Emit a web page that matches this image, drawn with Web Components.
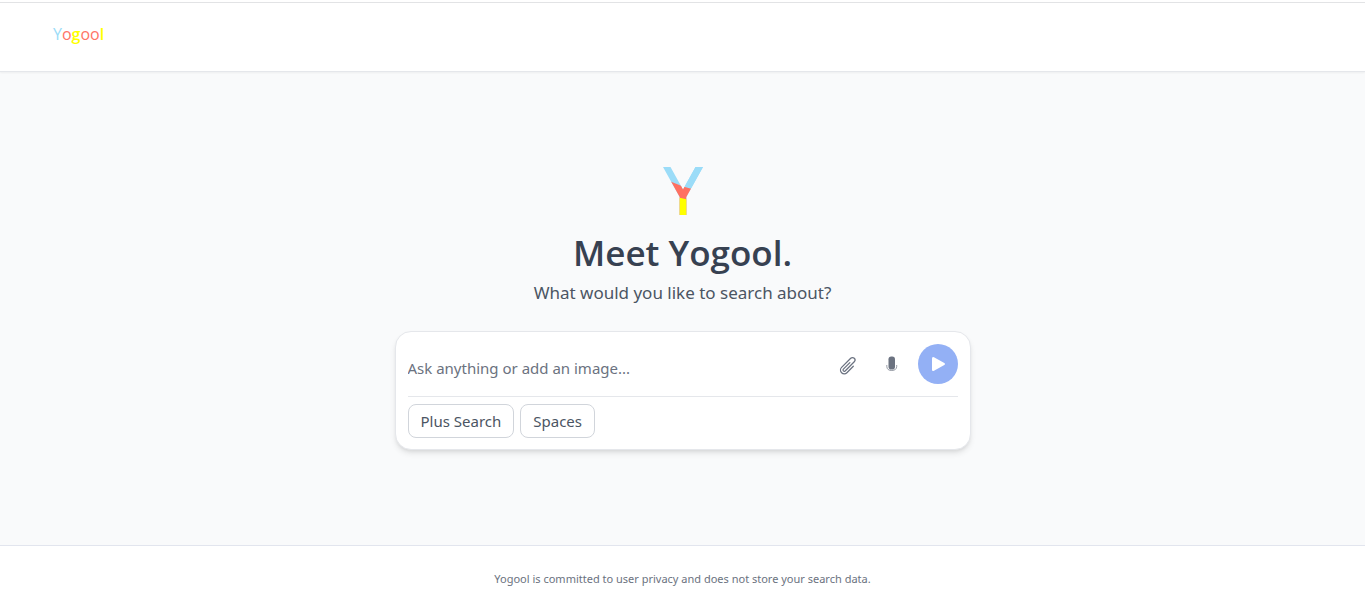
<!DOCTYPE html>
<html lang="en">
<head>
<meta charset="utf-8">
<meta name="viewport" content="width=device-width, initial-scale=1">
<title>Yogool</title>
<style>
  body { margin: 0; font-family: "Noto Sans", "Open Sans", sans-serif; color: #374151; background: #fff; }
</style>
</head>
<body>
<yogool-page>
  <site-header slot="header"></site-header>
  <hero-intro>
    <span slot="title">Meet Yogool.</span>
    <span slot="subtitle">What would you like to search about?</span>
  </hero-intro>
  <search-box placeholder="Ask anything or add an image...">
    <chip-button>Plus Search</chip-button>
    <chip-button>Spaces</chip-button>
  </search-box>
  <site-footer slot="footer">Yogool is committed to user privacy and does not store your search data.</site-footer>
</yogool-page>
<script>
class BaseElement extends HTMLElement {
  constructor() {
    super();
    const t = document.createElement('template');
    t.innerHTML = this.constructor.markup;
    this.attachShadow({ mode: 'open' }).append(t.content.cloneNode(true));
  }
}

customElements.define('yogool-page', class extends BaseElement {
  static markup = `
    <style>
      :host { display: flex; flex-direction: column; min-height: 100vh; padding-top: 2px; box-sizing: border-box; }
      main { flex: 1; display: flex; flex-direction: column; align-items: center; background: #f9fafb; padding: 91px 16px 95px; }
    </style>
    <slot name="header"></slot>
    <main><slot></slot></main>
    <slot name="footer"></slot>`;
});

customElements.define('site-header', class extends BaseElement {
  static markup = `
    <style>
      :host { display: block; position: relative; background: #fff; border-top: 1px solid #e2e3e5; border-bottom: 1px solid #e5e7eb; box-shadow: 0 1px 2px rgba(0,0,0,.05); padding: 19px 53px 25px; }
      a { display: block; width: max-content; font-family: "Open Sans", sans-serif; font-size: 16px; line-height: 24px; text-decoration: none; }
      .b { color: #9bdcf8; } .r { color: #ff7466; } .y { color: #ffff00; font-weight: 600; }
    </style>
    <a href="#" aria-label="Yogool"><span class="b">Y</span><span class="r">o</span><span class="y">g</span><span class="r">oo</span><span class="y">l</span></a>`;
});

customElements.define('hero-intro', class extends BaseElement {
  static markup = `
    <style>
      :host { display: flex; flex-direction: column; align-items: center; text-align: center; }
      svg { display: block; width: 40px; height: 56px; }
      h1 { margin: 14px 0 0; font-family: "Open Sans", sans-serif; font-size: 35px; line-height: 40px; font-weight: 600; color: #374151; }
      p { margin: 6px 0 0; font-size: 17px; line-height: 28px; color: #4b5563; }
    </style>
    <svg viewBox="0 0 40 56" aria-hidden="true">
      <defs><clipPath id="y"><path d="M0 4H7.500L20 26.500 32.500 4H40L23.300 34V52H16.700V34Z"/></clipPath></defs>
      <g clip-path="url(#y)">
        <path fill="#9bdcf8" d="M0 0H40V56H0Z"/>
        <path fill="#ff7061" d="M0 15.500L20 23.500 40 29V56H0Z"/>
        <path fill="#9bdcf8" d="M21 0H40V28L21 23Z"/>
        <path fill="#ffff00" d="M0 31L40 40V56H0Z"/>
      </g>
    </svg>
    <h1><slot name="title"></slot></h1>
    <p><slot name="subtitle"></slot></p>`;
});

customElements.define('chip-button', class extends BaseElement {
  static markup = `
    <style>
      :host { display: block; }
      button { display: block; font: inherit; font-size: 15px; line-height: 24px; padding: 4px 12px; color: #4b5563; background: #fff; border: 1px solid #d1d5db; border-radius: 8px; white-space: nowrap; cursor: pointer; }
    </style>
    <button type="button"><slot></slot></button>`;
});

customElements.define('search-box', class extends BaseElement {
  static markup = `
    <style>
      :host { display: block; box-sizing: border-box; width: 100%; max-width: 576px; margin-top: 24px; padding: 12px 12px 11px; background: #fff; border: 1px solid #e5e7eb; border-radius: 16px; box-shadow: 0 4px 6px -1px rgba(0,0,0,.1), 0 2px 4px -2px rgba(0,0,0,.1); }
      form { display: flex; align-items: center; padding-bottom: 12px; border-bottom: 1px solid #e5e7eb; }
      input { flex: 1; min-width: 0; height: 32px; margin: 8px 0 0; padding: 0; border: 0; outline: 0; background: none; font: inherit; font-size: 15px; color: #374151; }
      input::placeholder { color: #6b7280; opacity: 1; }
      button { display: grid; place-items: center; width: 40px; height: 40px; margin: 0; padding: 0; border: 0; border-radius: 50%; background: none; color: #6b7280; cursor: pointer; }
      .tools { display: flex; gap: 4px; margin-right: 6px; }
      .send { background: #93b0f5; color: #fff; }
      svg { display: block; }
      .chips { display: flex; flex-wrap: wrap; gap: 6px; padding-top: 7px; }
    </style>
    <form>
      <input type="text" aria-label="Search">
      <div class="tools">
        <button type="button" aria-label="Add an image">
          <svg width="20" height="24" viewBox="0 -4 24 28" fill="none" stroke="currentColor" stroke-width="1.500" stroke-linecap="round" stroke-linejoin="round"><path d="m18.375 12.739-7.693 7.693a4.500 4.500 0 0 1-6.364-6.364l10.940-10.940A3 3 0 1 1 19.500 7.372L8.552 18.320m.009-.010-.010.010m5.699-9.941-7.810 7.810a1.500 1.500 0 0 0 2.112 2.130"/></svg>
        </button>
        <button type="button" aria-label="Voice search">
          <svg width="20" height="20" viewBox="0 0 20 20"><rect x="6.500" y="2.500" width="6.500" height="13" rx="2.800" fill="currentColor"/><path d="M4.800 11V12.500Q5 16.500 9.700 16.500T14.700 12.500V11" fill="none" stroke="currentColor" stroke-opacity=".7"/></svg>
        </button>
      </div>
      <button class="send" type="submit" aria-label="Send">
        <svg width="24" height="24" viewBox="0 0 24 24" fill="currentColor"><path d="M6 6.500Q6 4.200 8 5.200L18.300 11Q20 12 18.300 13L8 18.800Q6 19.800 6 17.500Z"/></svg>
      </button>
    </form>
    <div class="chips"><slot></slot></div>`;
  connectedCallback() {
    this.shadowRoot.querySelector('input').placeholder = this.getAttribute('placeholder') || '';
    this.shadowRoot.querySelector('form').addEventListener('submit', e => e.preventDefault());
  }
});

customElements.define('site-footer', class extends BaseElement {
  static markup = `
    <style>
      :host { display: block; background: #fff; border-top: 1px solid #e2e5ee; padding: 25px 16px 4px; text-align: center; font-size: 11px; line-height: 16px; color: #6b7280; }
    </style>
    <slot></slot>`;
});
</script>
</body>
</html>
